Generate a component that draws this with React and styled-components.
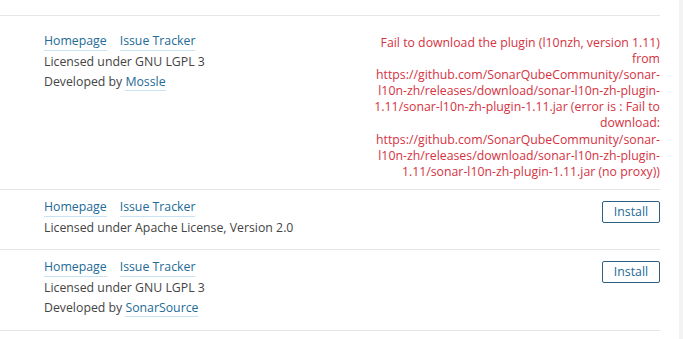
import React from "react";
import styled, { createGlobalStyle } from "styled-components";

const Global = createGlobalStyle`
  html, body {
    margin: 0;
    padding: 0;
    background: #fff;
  }
  body {
    font-family: "Open Sans", "Noto Sans", sans-serif;
    font-size: 12.3px;
    color: #444;
  }
`;

const Page = styled.div`
  display: flex;
  height: 339px;
  overflow: hidden;
`;

const Main = styled.div`
  width: 660px;
  padding-top: 15px;
`;

const Strip = styled.div`
  margin-left: auto;
  width: 4px;
  background: #f3f3f3;
`;

const List = styled.ul`
  list-style: none;
  margin: 0;
  padding: 0;
  border-top: 1px solid #e6e6e6;
`;

const Row = styled.li`
  display: flex;
  justify-content: space-between;
  align-items: flex-start;
  padding: ${(p) => p.$top}px 0 ${(p) => p.$bottom}px 44px;
  border-bottom: 1px solid #e6e6e6;
`;

const Meta = styled.div`
  line-height: 20px;
`;

const Links = styled.div`
  display: flex;
  align-items: flex-start;
  gap: 13px;
  height: 20px;
`;

const Link = styled.a`
  color: #236a97;
  text-decoration: none;
  border-bottom: 1px solid #cae3f2;
  line-height: 18px;
`;

const Line = styled.div``;

const Error = styled.div`
  margin-top: 3px;
  color: #d4333f;
  text-align: right;
  line-height: 16.1px;
  white-space: nowrap;
`;

const Install = styled.button`
  margin-top: 3px;
  width: 58px;
  height: 22px;
  padding: 0;
  background: #fff;
  border: 1px solid #2e5f80;
  border-radius: 2px;
  color: #236a97;
  font-family: inherit;
  font-size: 12.3px;
  cursor: pointer;
`;

const errorLines = [
  "Fail to download the plugin (l10nzh, version 1.11)",
  "from",
  "https://github.com/SonarQubeCommunity/sonar-",
  "l10n-zh/releases/download/sonar-l10n-zh-plugin-",
  "1.11/sonar-l10n-zh-plugin-1.11.jar (error is : Fail to",
  "download:",
  "https://github.com/SonarQubeCommunity/sonar-",
  "l10n-zh/releases/download/sonar-l10n-zh-plugin-",
  "1.11/sonar-l10n-zh-plugin-1.11.jar (no proxy))",
];

const PluginMeta = ({ license, developer }) => (
  <Meta>
    <Links>
      <Link href="#">Homepage</Link>
      <Link href="#">Issue Tracker</Link>
    </Links>
    <Line>Licensed under {license}</Line>
    {developer && (
      <Line>
        Developed by <Link href="#">{developer}</Link>
      </Line>
    )}
  </Meta>
);

export default function App() {
  return (
    <>
      <Global />
      <Page>
        <Main>
          <List>
            <Row $top={16} $bottom={9}>
              <PluginMeta license="GNU LGPL 3" developer="Mossle" />
              <Error>
                {errorLines.map((l, i) => (
                  <div key={i}>{l}</div>
                ))}
              </Error>
            </Row>
            <Row $top={8} $bottom={11}>
              <PluginMeta license="Apache License, Version 2.0" />
              <Install>Install</Install>
            </Row>
            <Row $top={8} $bottom={12}>
              <PluginMeta license="GNU LGPL 3" developer="SonarSource" />
              <Install>Install</Install>
            </Row>
          </List>
        </Main>
        <Strip />
      </Page>
    </>
  );
}
